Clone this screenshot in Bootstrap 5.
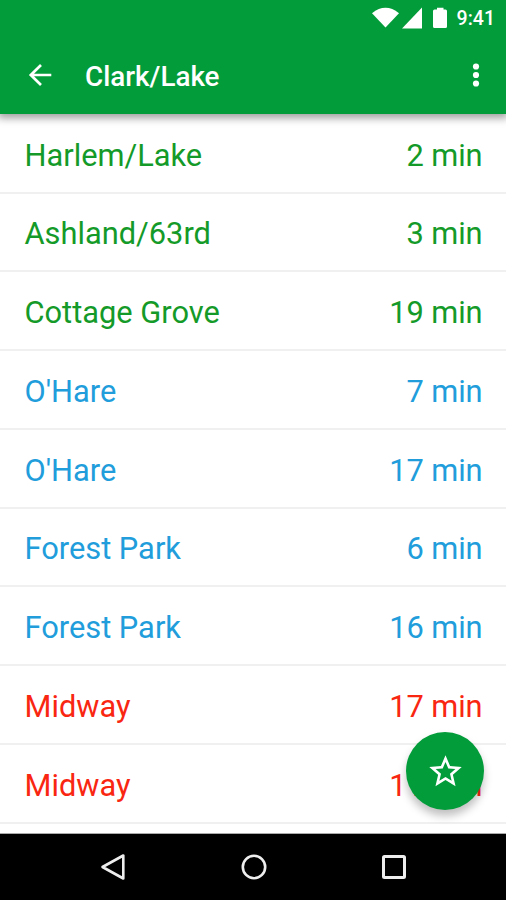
<!DOCTYPE html>
<html lang="en">
<head>
<meta charset="utf-8">
<meta name="viewport" content="width=device-width, initial-scale=1">
<title>Clark/Lake</title>
<link href="https://cdn.jsdelivr.net/npm/bootstrap@5.3.0/dist/css/bootstrap.min.css" rel="stylesheet">
<style>
  body { font-family: Roboto, "Liberation Sans", sans-serif; background: #fff; }
  .phone { width: 506px; height: 900px; }
  .appbar { height: 114px; background: #039c3a; box-shadow: 0 2px 8px 2px rgba(0,0,0,.38); z-index: 2; }
  .status { height: 36px; padding-right: 11px; }
  .clock { font-size: 19.5px; font-weight: 500; line-height: 36px; padding-top: 2px; margin-left: 9px; }
  .toolbar { height: 78px; padding: 0 20px 0 24px; }
  .title { font-size: 27.8px; font-weight: 500; line-height: 40px; margin-left: 29px; padding-top: 3px; }
  .arrivals { height: 719px; padding-top: .8px; }
  .arrival { height: 78.75px; flex: none; padding: 5px 23.5px 0 24.5px; font-size: 30.8px; line-height: 40px; border-bottom: 2px solid #f0f0f0; }
  .arrival span:last-child { letter-spacing: -.1px; }
  .line-green { color: #149a28; }
  .line-blue { color: #219ddc; }
  .line-red { color: #f92712; }
  .fab { width: 78px; height: 78px; right: 22px; bottom: 90px; background: #039c3a; box-shadow: 0 6px 9px rgba(0,0,0,.25); z-index: 3; }
  .navkeys { height: 67px; background: #000; border-top: 1px solid #aaa; padding: 0 98px 0 99px; z-index: 1; }
</style>
</head>
<body>
<div class="phone d-flex flex-column position-relative overflow-hidden">
  <header class="appbar flex-shrink-0 position-relative text-white">
    <div class="status d-flex align-items-center justify-content-end">
      <svg width="76" height="24" viewBox="0 0 76 24" fill="#fff">
        <path d="M0 7.200Q13.500-3.600 27 7.200L13.500 21.500Z"/>
        <path d="M30 22.500H50V1.500Z"/>
        <path d="M62.500 3.500H65V1.700H71.500V3.500H73.500Q75 3.500 75 5V20.500Q75 22 73.500 22H62.500Q61 22 61 20.500V5Q61 3.500 62.500 3.500Z"/>
      </svg>
      <span class="clock">9:41</span>
    </div>
    <div class="toolbar d-flex align-items-center">
      <svg width="32" height="32" viewBox="0 0 32 32" fill="none" stroke="#fff" stroke-width="2.700"><path d="M27.300 16H6.500M17 6L6.800 16L17 26"/></svg>
      <h1 class="title mb-0">Clark/Lake</h1>
      <svg class="ms-auto" width="20" height="32" viewBox="0 0 20 32" fill="#fff"><circle cx="10" cy="7.500" r="3.100"/><circle cx="10" cy="16" r="3.100"/><circle cx="10" cy="24.500" r="3.100"/></svg>
    </div>
  </header>
  <main class="arrivals d-flex flex-column overflow-hidden">
    <div class="arrival line-green d-flex align-items-center justify-content-between"><span>Harlem/Lake</span><span>2 min</span></div>
    <div class="arrival line-green d-flex align-items-center justify-content-between"><span>Ashland/63rd</span><span>3 min</span></div>
    <div class="arrival line-green d-flex align-items-center justify-content-between"><span>Cottage Grove</span><span>19 min</span></div>
    <div class="arrival line-blue d-flex align-items-center justify-content-between"><span>O'Hare</span><span>7 min</span></div>
    <div class="arrival line-blue d-flex align-items-center justify-content-between"><span>O'Hare</span><span>17 min</span></div>
    <div class="arrival line-blue d-flex align-items-center justify-content-between"><span>Forest Park</span><span>6 min</span></div>
    <div class="arrival line-blue d-flex align-items-center justify-content-between"><span>Forest Park</span><span>16 min</span></div>
    <div class="arrival line-red d-flex align-items-center justify-content-between"><span>Midway</span><span>17 min</span></div>
    <div class="arrival line-red d-flex align-items-center justify-content-between"><span>Midway</span><span>11 min</span></div>
  </main>
  <button class="fab position-absolute rounded-circle border-0 p-0 d-flex align-items-center justify-content-center" aria-label="Favorite">
    <svg width="39" height="39" viewBox="0 0 24 24" fill="#fff"><path d="M22 9.240l-7.190-.620L12 2 9.190 8.630 2 9.240l5.460 4.730L5.820 21 12 17.270 18.180 21l-1.630-7.030L22 9.240zM12 15.400l-3.760 2.270 1-4.280-3.320-2.880 4.380-.380L12 6.100l1.710 4.040 4.380.380-3.320 2.880 1 4.280L12 15.400z"/></svg>
  </button>
  <footer class="navkeys d-flex align-items-center justify-content-between flex-shrink-0">
    <svg width="28" height="30" viewBox="0 0 28 30" fill="none" stroke="#eee" stroke-width="2.600" stroke-linejoin="round"><path d="M24.300 3.500V26.500L3.500 15Z"/></svg>
    <svg width="28" height="28" viewBox="0 0 28 28" fill="none" stroke="#eee" stroke-width="2.600"><circle cx="14" cy="14" r="11.200"/></svg>
    <svg width="28" height="28" viewBox="0 0 28 28" fill="none" stroke="#eee" stroke-width="3"><rect x="3.500" y="3.500" width="21" height="21" rx="1"/></svg>
  </footer>
</div>
<script src="https://cdn.jsdelivr.net/npm/bootstrap@5.3.0/dist/js/bootstrap.bundle.min.js"></script>
</body>
</html>
